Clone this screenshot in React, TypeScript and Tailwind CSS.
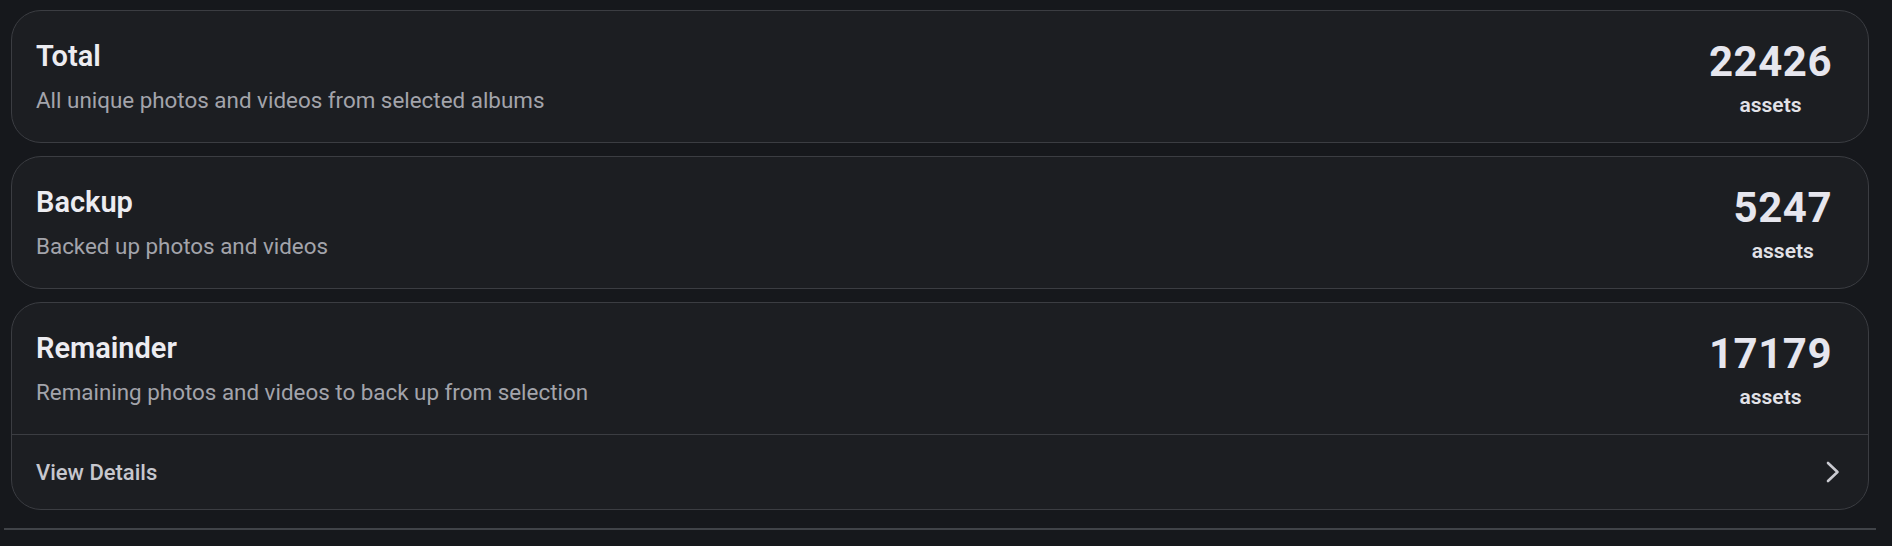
import { ReactNode } from "react";

type Stat = {
  title: string;
  description: string;
  count: number;
  footer?: ReactNode;
};

const stats: Stat[] = [
  { title: "Total", description: "All unique photos and videos from selected albums", count: 22426 },
  { title: "Backup", description: "Backed up photos and videos", count: 5247 },
  { title: "Remainder", description: "Remaining photos and videos to back up from selection", count: 17179, footer: "View Details" },
];

function Chevron() {
  return (
    <svg width="14" height="22" viewBox="0 0 14 22" fill="none" className="text-[#c9cad0]">
      <polyline points="2,2 11.5,11 2,20" stroke="currentColor" strokeWidth="2.6" strokeLinecap="round" strokeLinejoin="round" />
    </svg>
  );
}

function StatCard({ title, description, count, footer }: Stat) {
  return (
    <div className="overflow-hidden rounded-[30px] border border-[#3b3d42] bg-[#1c1e22]">
      <div className="flex items-start justify-between pt-[27px] pr-[36px] pb-[27px] pl-[24px]">
        <div className="flex flex-col gap-[11px]">
          <h3 className="text-[29px] leading-[36px] font-semibold text-[#ececf1]">{title}</h3>
          <p className="text-[22.4px] leading-[30px] text-[#a3a4ab]">{description}</p>
        </div>
        <div className="mt-[4px] flex flex-col items-center gap-[13px]">
          <span className="text-[42px] leading-[40px] font-bold tracking-[0.5px] text-[#e6e6ee]">{count}</span>
          <span className="text-[21px] leading-[20px] font-semibold text-[#e2e2e8]">assets</span>
        </div>
      </div>
      {footer && (
        <div className="flex h-[75px] items-center justify-between border-t border-[#3b3d42] pr-[28px] pl-[24px]">
          <span className="text-[22px] font-medium text-[#c6c7ce]">{footer}</span>
          <Chevron />
        </div>
      )}
    </div>
  );
}

export default function App() {
  return (
    <div className="min-h-[546px] bg-[#16181c] pt-[10px] font-['Roboto',sans-serif]">
      <div className="ml-[11px] mr-[23px] flex flex-col gap-[13px]">
        {stats.map((s) => (
          <StatCard key={s.title} {...s} />
        ))}
      </div>
      <div className="mt-[18px] ml-[4px] mr-[16px] h-[2px] bg-[#404348]" />
    </div>
  );
}
